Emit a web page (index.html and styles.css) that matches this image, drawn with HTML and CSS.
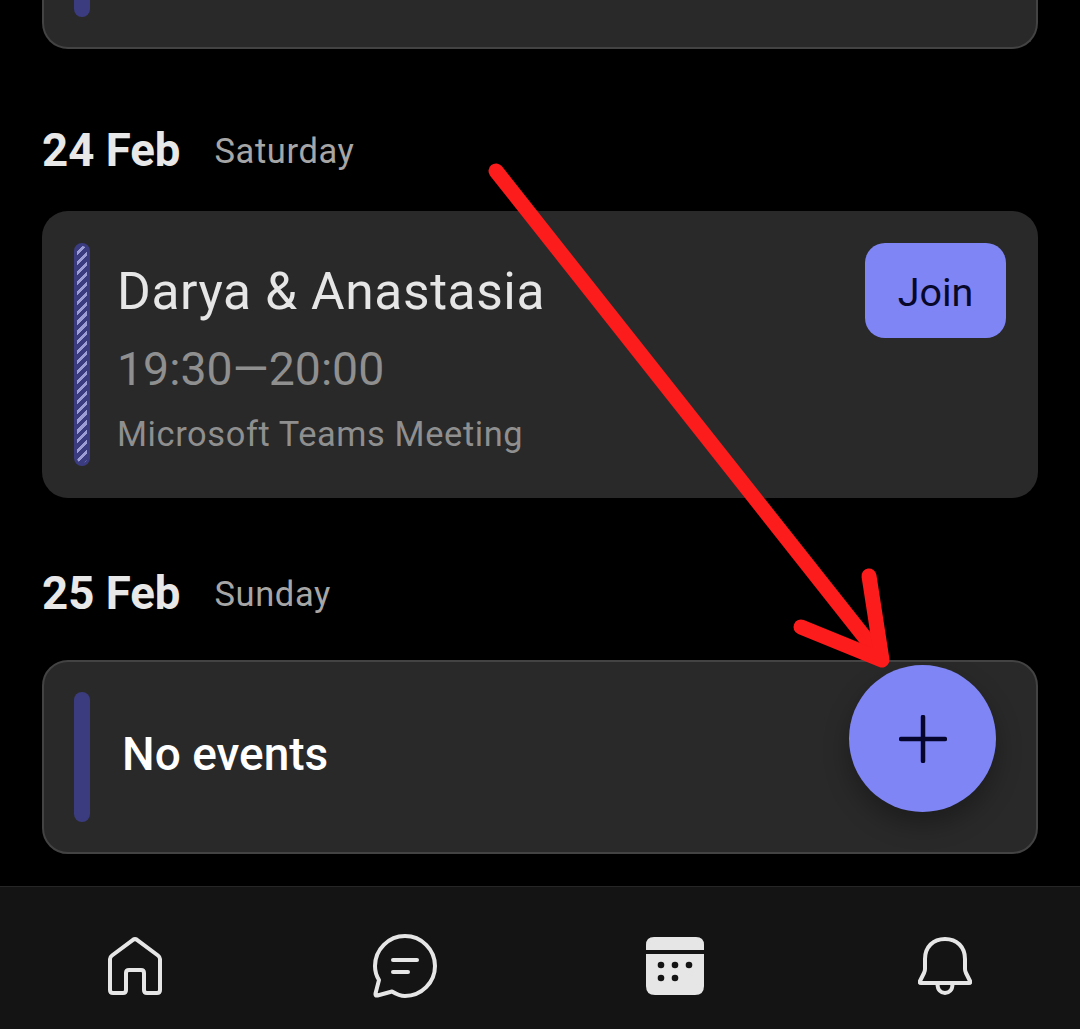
FILE: index.html
```html
<!DOCTYPE html>
<html lang="en">
<head>
    <meta charset="UTF-8">
    <meta name="viewport" content="width=device-width, initial-scale=1.0">
    <title>Calendar</title>
    <link rel="stylesheet" href="styles.css">
</head>
<body>

    <div class="screen">
        <div class="agenda">
            <div class="card card-cut">
                <div class="bar bar-cut"></div>
            </div>

            <div class="day-head day-first">
                <span class="day-date">24 Feb</span>
                <span class="day-name">Saturday</span>
            </div>
            <div class="card card-event">
                <div class="bar bar-striped"></div>
                <div class="event-info">
                    <div class="event-title">Darya &amp; Anastasia</div>
                    <div class="event-time">19:30—20:00</div>
                    <div class="event-place">Microsoft Teams Meeting</div>
                </div>
                <button class="join-btn">Join</button>
            </div>

            <div class="day-head day-second">
                <span class="day-date">25 Feb</span>
                <span class="day-name">Sunday</span>
            </div>
            <div class="card card-empty">
                <div class="bar bar-empty"></div>
                <div class="empty-text">No events</div>
            </div>
        </div>

        <div class="nav">
            <svg class="nav-icon" width="54" height="58" viewBox="0 0 54 58" fill="none" stroke="#e6e6e6" stroke-width="4" stroke-linejoin="round" stroke-linecap="round">
                <path d="M2 22 Q2 20 4 18.5 L25 2.8 Q27 1.5 29 2.8 L50 18.5 Q52 20 52 22 V53 Q52 56 49 56 H39 Q36 56 36 53 V36 Q36 33 33 33 H21 Q18 33 18 36 V53 Q18 56 15 56 H5 Q2 56 2 53 Z"/>
            </svg>
            <svg class="nav-icon" width="64" height="64" viewBox="0 0 64 64" fill="none" stroke="#e6e6e6" stroke-width="4" stroke-linecap="round" stroke-linejoin="round">
                <path d="M19 57.5 C23 60 27 62 32 62 C48.5 62 62 48.5 62 32 C62 15.5 48.5 2 32 2 C15.5 2 2 15.5 2 32 C2 37 3.5 42 6 46 L2.5 59.5 Q2 62 4.5 61.5 Z"/>
                <path d="M20 26 H44"/>
                <path d="M20 38 H35"/>
            </svg>
            <svg class="nav-icon" width="58" height="58" viewBox="0 0 58 58">
                <path d="M0 13 V8 Q0 0 8 0 H50 Q58 0 58 8 V13 Z" fill="#e6e6e6"/>
                <path d="M0 17 H58 V49 Q58 58 49 58 H9 Q0 58 0 49 Z" fill="#e6e6e6"/>
                <g fill="#141414">
                    <circle cx="15" cy="28" r="3.3"/>
                    <circle cx="29" cy="28" r="3.3"/>
                    <circle cx="43" cy="28" r="3.3"/>
                    <circle cx="15" cy="41" r="3.3"/>
                    <circle cx="29" cy="41" r="3.3"/>
                </g>
            </svg>
            <svg class="nav-icon" width="54" height="58" viewBox="0 0 54 58" fill="none" stroke="#e6e6e6" stroke-width="4" stroke-linejoin="round" stroke-linecap="round">
                <path d="M7 22 C7 10 15 2 27 2 C39 2 47 10 47 22 V32 Q47 34 48 36 L52 44 Q53 46 51 46 H3 Q1 46 2 44 L6 36 Q7 34 7 32 Z"/>
                <path d="M19.5 47 C19.5 53 23 56 27 56 C31 56 34.5 53 34.5 47"/>
            </svg>
        </div>

        <button class="fab">
            <svg width="48" height="48" viewBox="0 0 48 48" stroke="#05052e" stroke-width="4.5" stroke-linecap="round">
                <path d="M24 2 V46"/>
                <path d="M2 24 H46"/>
            </svg>
        </button>

        <svg class="arrow" width="1080" height="700" viewBox="0 0 1080 700" fill="none" stroke="#fc1c1c" stroke-linecap="round" stroke-linejoin="round">
            <path d="M496 171 L878 654" stroke-width="15"/>
            <path d="M801 627 L882 660 L869 576" stroke-width="15"/>
        </svg>
    </div>

</body>
</html>
```

FILE: styles.css
```css
* {
    box-sizing: border-box;
}
body {
    margin: 0;
    background: #000000;
    font-family: Roboto, "Noto Sans", sans-serif;
}
.screen {
    position: relative;
    width: 1080px;
    height: 1029px;
    overflow: hidden;
    display: flex;
    flex-direction: column;
    justify-content: space-between;
}
.agenda {
    padding: 0 42px;
}
.card {
    display: flex;
    background: #292929;
    border-radius: 26px;
}
.card-cut {
    height: 49px;
    padding-left: 30px;
    overflow: hidden;
    border: 2px solid #434343;
    border-top: none;
    border-radius: 0 0 26px 26px;
}
.card-event {
    height: 287px;
    padding: 32px;
    justify-content: space-between;
}
.card-empty {
    height: 194px;
    padding: 30px 30px;
    align-items: center;
    border: 2px solid #434343;
}
.bar {
    width: 16px;
    border-radius: 8px;
    background: #3b3c80;
    flex-shrink: 0;
}
.bar-cut {
    height: 37px;
    margin-top: -20px;
}
.bar-empty {
    height: 130px;
}
.bar-striped {
    height: 223px;
    border: 3px solid #3b3c80;
    background: repeating-linear-gradient(135deg, #3b3c80 0, #3b3c80 4px, #9c9dd4 4px, #9c9dd4 7px);
}
.day-head {
    display: flex;
    align-items: center;
    gap: 34px;
    color: #e8e8e8;
}
.day-first {
    margin-top: 77px;
    margin-bottom: 35px;
}
.day-second {
    margin-top: 71px;
    margin-bottom: 41px;
}
.day-date {
    font-size: 45.6px;
    font-weight: 700;
    line-height: 50px;
}
.day-name {
    font-size: 34.5px;
    color: #a6a6a6;
    letter-spacing: 0.6px;
}
.event-info {
    flex: 1;
    padding-left: 27px;
}
.event-title {
    margin-top: 19px;
    font-size: 51.5px;
    line-height: 60px;
    color: #e6e6e6;
    letter-spacing: 0.6px;
}
.event-time {
    margin-top: 21px;
    font-size: 46.4px;
    line-height: 52px;
    color: #8f8f8f;
}
.event-place {
    margin-top: 19px;
    font-size: 34.4px;
    line-height: 40px;
    color: #8f8f8f;
    letter-spacing: 0.6px;
}
.join-btn {
    width: 141px;
    height: 95px;
    border: none;
    border-radius: 20px;
    padding: 4px 0 0;
    background: #7f85f5;
    color: #08082a;
    font-family: inherit;
    font-size: 39.5px;
    font-weight: 400;
}
.empty-text {
    margin-left: 32px;
    margin-bottom: 6px;
    font-size: 46px;
    font-weight: 500;
    color: #ffffff;
}
.nav {
    height: 143px;
    display: grid;
    grid-template-columns: repeat(4, 1fr);
    align-items: center;
    justify-items: center;
    background: #141414;
    border-top: 1px solid #262626;
    padding-top: 16px;
}
.nav-icon {
    display: block;
}
.fab {
    position: absolute;
    left: 849px;
    top: 665px;
    width: 147px;
    height: 147px;
    display: flex;
    align-items: center;
    justify-content: center;
    border: none;
    padding: 0;
    border-radius: 50%;
    background: #7f85f5;
    box-shadow: 0 12px 26px rgba(0, 0, 0, 0.3);
}
.arrow {
    position: absolute;
    left: 0;
    top: 0;
}
```
